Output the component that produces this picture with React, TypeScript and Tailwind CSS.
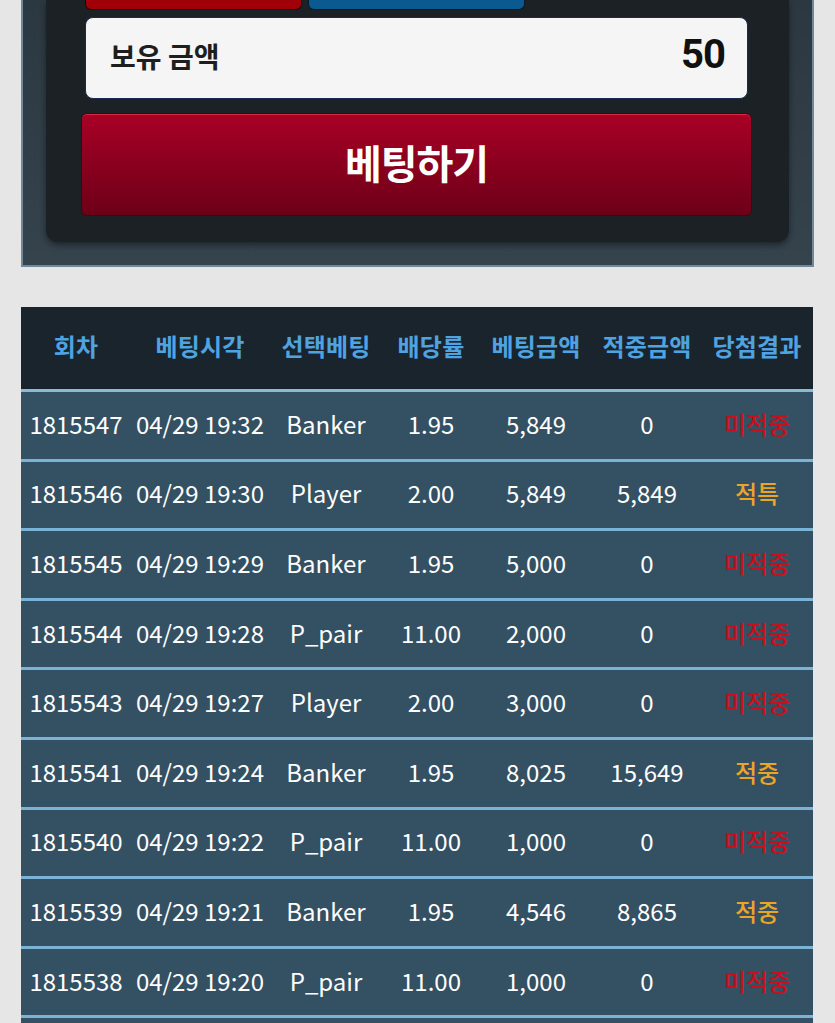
const font = { fontFamily: '"Noto Sans CJK KR", "Noto Sans", sans-serif' };

type Row = {
  no: string;
  time: string;
  pick: string;
  odds: string;
  bet: string;
  win: string;
  result: "미적중" | "적중" | "적특";
};

const rows: Row[] = [
  { no: "1815547", time: "04/29 19:32", pick: "Banker", odds: "1.95", bet: "5,849", win: "0", result: "미적중" },
  { no: "1815546", time: "04/29 19:30", pick: "Player", odds: "2.00", bet: "5,849", win: "5,849", result: "적특" },
  { no: "1815545", time: "04/29 19:29", pick: "Banker", odds: "1.95", bet: "5,000", win: "0", result: "미적중" },
  { no: "1815544", time: "04/29 19:28", pick: "P_pair", odds: "11.00", bet: "2,000", win: "0", result: "미적중" },
  { no: "1815543", time: "04/29 19:27", pick: "Player", odds: "2.00", bet: "3,000", win: "0", result: "미적중" },
  { no: "1815541", time: "04/29 19:24", pick: "Banker", odds: "1.95", bet: "8,025", win: "15,649", result: "적중" },
  { no: "1815540", time: "04/29 19:22", pick: "P_pair", odds: "11.00", bet: "1,000", win: "0", result: "미적중" },
  { no: "1815539", time: "04/29 19:21", pick: "Banker", odds: "1.95", bet: "4,546", win: "8,865", result: "적중" },
  { no: "1815538", time: "04/29 19:20", pick: "P_pair", odds: "11.00", bet: "1,000", win: "0", result: "미적중" },
];

const headers = ["회차", "베팅시각", "선택베팅", "배당률", "베팅금액", "적중금액", "당첨결과"];

const cols = "grid grid-cols-[110px_138px_114px_96px_114px_108px_112px]";

function BetPanel() {
  return (
    <div className="mx-[21px] h-[267px] bg-gradient-to-b from-[#2c3841] to-[#35434d] border-l-2 border-r-2 border-b-2 border-[#71889a]">
      <div className="mx-[23px] h-[242px] rounded-b-[12px] bg-[#1b2125] shadow-[0_3px_6px_rgba(0,0,0,0.45)] px-[38px] flex flex-col">
        <div className="flex gap-[6px] px-[1px]">
          <div className="w-[217px] h-[10px] rounded-b-[6px] bg-[#a00008] border border-t-0 border-[#2a0005]" />
          <div className="w-[217px] h-[10px] rounded-b-[6px] bg-[#0a5a90] border border-t-0 border-[#021a2c]" />
        </div>
        <div className="mt-[7px] ml-[1px] w-[663px] h-[82px] rounded-[8px] bg-[#f5f5f5] border border-[#1b2a52] flex items-center justify-between pl-[24px] pr-[22px] pb-[6px]">
          <span className="text-[28px] font-bold text-[#1e1e1e] pt-[2px]">보유 금액</span>
          <span className="text-[40px] font-bold text-[#111] tracking-[-1px]" style={{ fontFamily: "Roboto, sans-serif" }}>50</span>
        </div>
        <button className="mt-[14px] -ml-[3px] w-[671px] h-[103px] rounded-[6px] bg-gradient-to-b from-[#a90026] to-[#6d0017] border border-[#4a0010] shadow-[inset_0_1px_0_rgba(255,80,100,0.5)] text-white text-[40px] font-bold tracking-[-1px] pb-[6px]">
          베팅하기
        </button>
      </div>
    </div>
  );
}

function ResultText({ result }: { result: Row["result"] }) {
  const color = result === "미적중" ? "text-[#c8101c]" : "text-[#eba526]";
  return <span className={`${color} font-medium`}>{result}</span>;
}

function HistoryTable() {
  return (
    <div className="mx-[21px] mt-[40px] w-[792px]">
      <div className={`${cols} h-[85px] items-center bg-[#1a242d] border-b-[3px] border-[#8cbad6]`}>
        {headers.map((h) => (
          <div key={h} className="text-center text-[24px] font-bold text-[#4fa3e0] tracking-[0.2px] pb-[4px]">
            {h}
          </div>
        ))}
      </div>
      {rows.map((r) => (
        <div key={r.no} className={`${cols} h-[69.6px] items-center bg-[#345063] border-b-[3px] border-[#7ab3d6] text-[24px] text-white pb-[3px]`}>
          <div className="text-center">{r.no}</div>
          <div className="text-center">{r.time}</div>
          <div className="text-center">{r.pick}</div>
          <div className="text-center">{r.odds}</div>
          <div className="text-center">{r.bet}</div>
          <div className="text-center">{r.win}</div>
          <div className="text-center">
            <ResultText result={r.result} />
          </div>
        </div>
      ))}
      <div className="h-[40px] bg-[#345063]" />
    </div>
  );
}

export default function App() {
  return (
    <div className="h-[1023px] overflow-hidden bg-[#e6e6e6]" style={font}>
      <BetPanel />
      <HistoryTable />
    </div>
  );
}
